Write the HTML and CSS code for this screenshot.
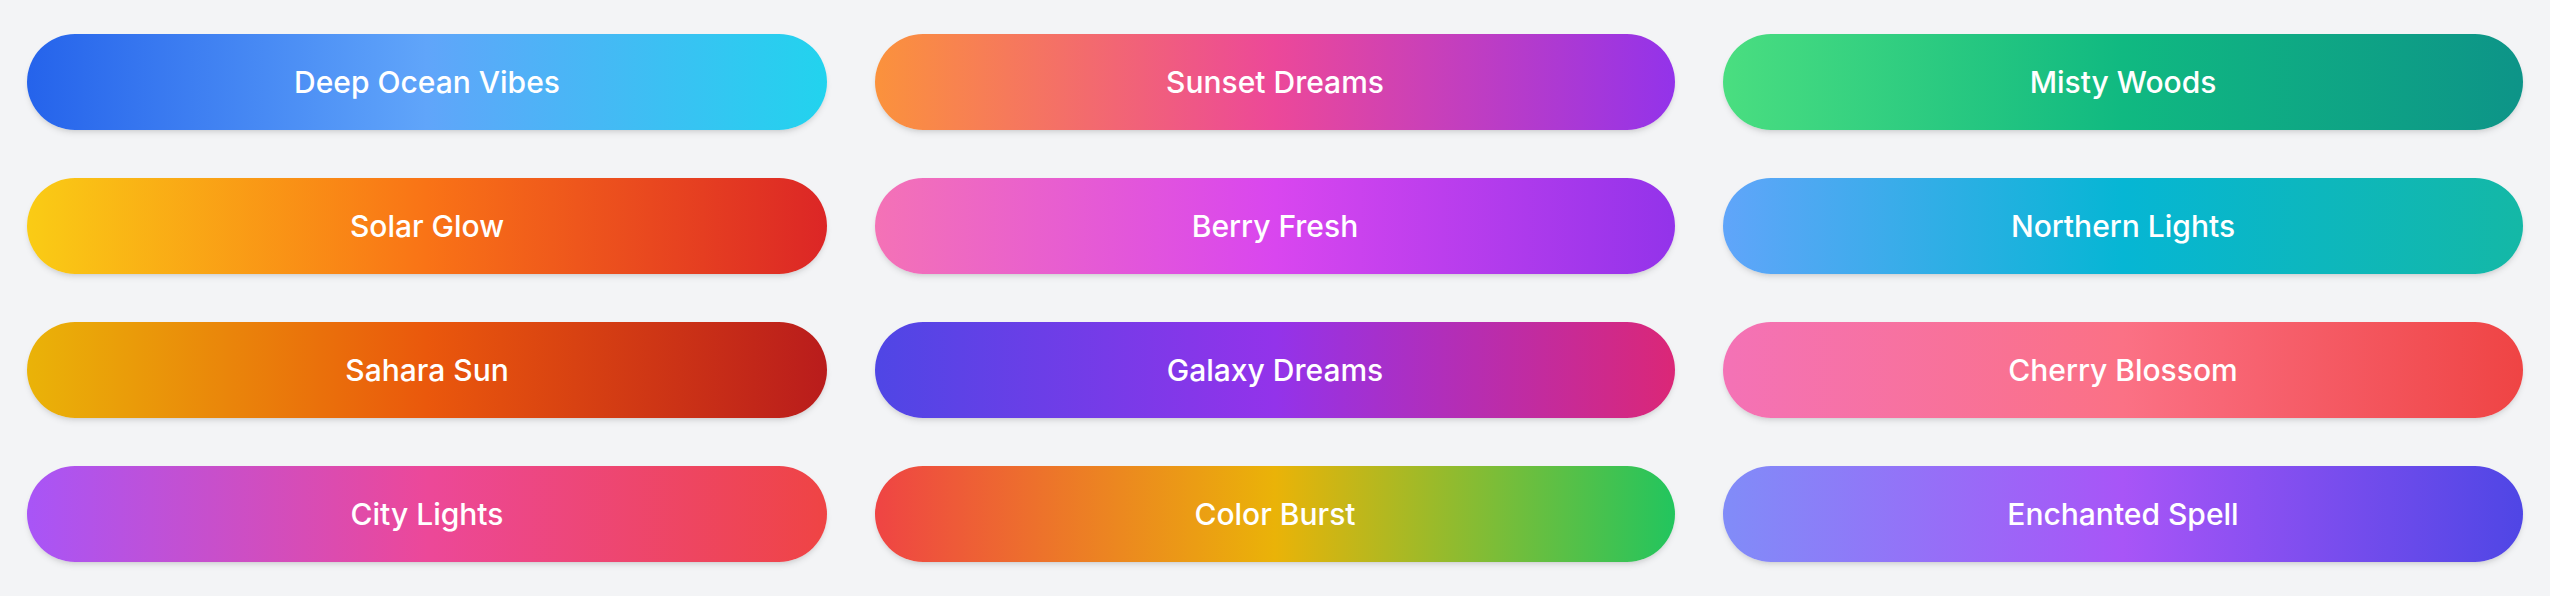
FILE: index.html
```html
<!doctype html>
<html>
<head>
    <meta charset="utf-8">
    <title>Gradient Buttons</title>
    <link rel="stylesheet" href="styles.css">
</head>
<body>
	<div class="grid">
		<button class="btn ocean">Deep Ocean Vibes</button>
		<button class="btn sunset">Sunset Dreams</button>
		<button class="btn woods">Misty Woods</button>
		<button class="btn solar">Solar Glow</button>
		<button class="btn berry">Berry Fresh</button>
		<button class="btn northern">Northern Lights</button>
		<button class="btn sahara">Sahara Sun</button>
		<button class="btn galaxy">Galaxy Dreams</button>
		<button class="btn cherry">Cherry Blossom</button>
		<button class="btn city">City Lights</button>
		<button class="btn burst">Color Burst</button>
		<button class="btn spell">Enchanted Spell</button>
	</div>
</body>
</html>
```

FILE: styles.css
```css
*{margin: 0;padding: 0;box-sizing: border-box;}
body{background: #f3f4f6;font-family: Inter, "Noto Sans", sans-serif;}
.grid{
	display: grid;grid-template-columns: repeat(3, 800px);
	gap: 48px;padding: 34px 27px;
}
.btn{
	height: 96px;border: none;border-radius: 48px;cursor: pointer;
	color: #fff;font-family: inherit;font-size: 30px;font-weight: 500;
	box-shadow: 0 4px 6px -1px rgba(0,0,0,.1), 0 2px 4px -2px rgba(0,0,0,.1);
}
.ocean{background: linear-gradient(to right, #2563eb, #60a5fa, #22d3ee);}
.sunset{background: linear-gradient(to right, #fb923c, #ec4899, #9333ea);}
.woods{background: linear-gradient(to right, #4ade80, #10b981, #0d9488);}
.solar{background: linear-gradient(to right, #facc15, #f97316, #dc2626);}
.berry{background: linear-gradient(to right, #f472b6, #d946ef, #9333ea);}
.northern{background: linear-gradient(to right, #60a5fa, #06b6d4, #14b8a6);}
.sahara{background: linear-gradient(to right, #eab308, #ea580c, #b91c1c);}
.galaxy{background: linear-gradient(to right, #4f46e5, #9333ea, #db2777);}
.cherry{background: linear-gradient(to right, #f472b6, #fb7185, #ef4444);}
.city{background: linear-gradient(to right, #a855f7, #ec4899, #ef4444);}
.burst{background: linear-gradient(to right, #ef4444, #eab308, #22c55e);}
.spell{background: linear-gradient(to right, #818cf8, #a855f7, #4f46e5);}
```
